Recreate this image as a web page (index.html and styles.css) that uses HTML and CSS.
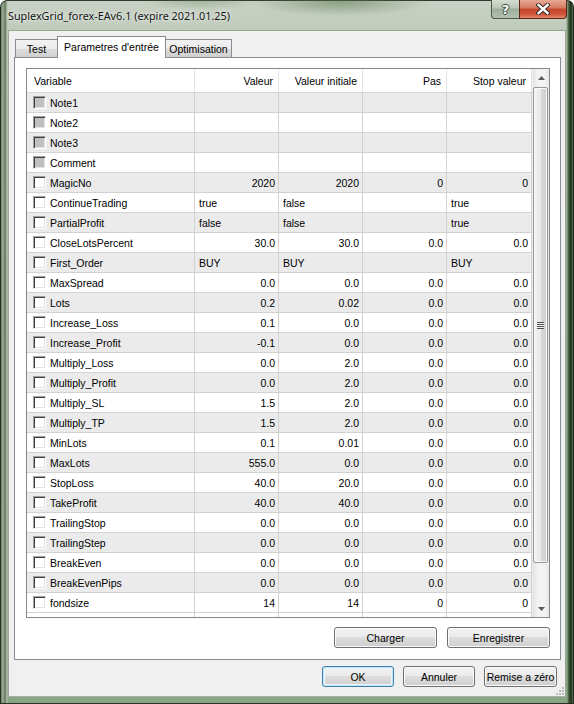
FILE: index.html
```html
<!DOCTYPE html>
<html lang="fr">
<head>
<meta charset="utf-8">
<title>SuplexGrid_forex-EAv6.1</title>
<link rel="stylesheet" href="styles.css">
</head>
<body>
<div class="window">
  <div class="titlebar">
    <div class="title">SuplexGrid_forex-EAv6.1 (expire 2021.01.25)</div>
    <div class="caption-buttons">
      <div class="cap help">?</div>
      <div class="cap close">
        <svg width="14" height="12" viewBox="0 0 14 12"><path d="M2.5 2 L11.5 10 M11.5 2 L2.5 10" stroke="#3a2a26" stroke-width="4.4" stroke-linecap="square" fill="none"/><path d="M2.5 2 L11.5 10 M11.5 2 L2.5 10" stroke="#ffffff" stroke-width="2.4" stroke-linecap="square" fill="none"/></svg>
      </div>
    </div>
  </div>
  <div class="client">
    <div class="tabs">
      <div class="tab first">Test</div>
      <div class="tab selected">Parametres d'entrée</div>
      <div class="tab last">Optimisation</div>
    </div>
    <div class="panel">
      <div class="list">
        <div class="grid">
          <div class="row head">
            <div class="c var">Variable</div>
            <div class="c num">Valeur</div>
            <div class="c num">Valeur initiale</div>
            <div class="c num">Pas</div>
            <div class="c num">Stop valeur</div>
          </div>
          <div class="row odd"><div class="c var"><span class="chk dis"></span>Note1</div><div class="c"></div><div class="c"></div><div class="c"></div><div class="c"></div></div>
          <div class="row"><div class="c var"><span class="chk dis"></span>Note2</div><div class="c"></div><div class="c"></div><div class="c"></div><div class="c"></div></div>
          <div class="row odd"><div class="c var"><span class="chk dis"></span>Note3</div><div class="c"></div><div class="c"></div><div class="c"></div><div class="c"></div></div>
          <div class="row"><div class="c var"><span class="chk dis"></span>Comment</div><div class="c"></div><div class="c"></div><div class="c"></div><div class="c"></div></div>
          <div class="row odd"><div class="c var"><span class="chk"></span>MagicNo</div><div class="c num">2020</div><div class="c num">2020</div><div class="c num">0</div><div class="c num">0</div></div>
          <div class="row"><div class="c var"><span class="chk"></span>ContinueTrading</div><div class="c txt">true</div><div class="c txt">false</div><div class="c"></div><div class="c txt">true</div></div>
          <div class="row odd"><div class="c var"><span class="chk"></span>PartialProfit</div><div class="c txt">false</div><div class="c txt">false</div><div class="c"></div><div class="c txt">true</div></div>
          <div class="row"><div class="c var"><span class="chk"></span>CloseLotsPercent</div><div class="c num">30.0</div><div class="c num">30.0</div><div class="c num">0.0</div><div class="c num">0.0</div></div>
          <div class="row odd"><div class="c var"><span class="chk"></span>First_Order</div><div class="c txt">BUY</div><div class="c txt">BUY</div><div class="c"></div><div class="c txt">BUY</div></div>
          <div class="row"><div class="c var"><span class="chk"></span>MaxSpread</div><div class="c num">0.0</div><div class="c num">0.0</div><div class="c num">0.0</div><div class="c num">0.0</div></div>
          <div class="row odd"><div class="c var"><span class="chk"></span>Lots</div><div class="c num">0.2</div><div class="c num">0.02</div><div class="c num">0.0</div><div class="c num">0.0</div></div>
          <div class="row"><div class="c var"><span class="chk"></span>Increase_Loss</div><div class="c num">0.1</div><div class="c num">0.0</div><div class="c num">0.0</div><div class="c num">0.0</div></div>
          <div class="row odd"><div class="c var"><span class="chk"></span>Increase_Profit</div><div class="c num">-0.1</div><div class="c num">0.0</div><div class="c num">0.0</div><div class="c num">0.0</div></div>
          <div class="row"><div class="c var"><span class="chk"></span>Multiply_Loss</div><div class="c num">0.0</div><div class="c num">2.0</div><div class="c num">0.0</div><div class="c num">0.0</div></div>
          <div class="row odd"><div class="c var"><span class="chk"></span>Multiply_Profit</div><div class="c num">0.0</div><div class="c num">2.0</div><div class="c num">0.0</div><div class="c num">0.0</div></div>
          <div class="row"><div class="c var"><span class="chk"></span>Multiply_SL</div><div class="c num">1.5</div><div class="c num">2.0</div><div class="c num">0.0</div><div class="c num">0.0</div></div>
          <div class="row odd"><div class="c var"><span class="chk"></span>Multiply_TP</div><div class="c num">1.5</div><div class="c num">2.0</div><div class="c num">0.0</div><div class="c num">0.0</div></div>
          <div class="row"><div class="c var"><span class="chk"></span>MinLots</div><div class="c num">0.1</div><div class="c num">0.01</div><div class="c num">0.0</div><div class="c num">0.0</div></div>
          <div class="row odd"><div class="c var"><span class="chk"></span>MaxLots</div><div class="c num">555.0</div><div class="c num">0.0</div><div class="c num">0.0</div><div class="c num">0.0</div></div>
          <div class="row"><div class="c var"><span class="chk"></span>StopLoss</div><div class="c num">40.0</div><div class="c num">20.0</div><div class="c num">0.0</div><div class="c num">0.0</div></div>
          <div class="row odd"><div class="c var"><span class="chk"></span>TakeProfit</div><div class="c num">40.0</div><div class="c num">40.0</div><div class="c num">0.0</div><div class="c num">0.0</div></div>
          <div class="row"><div class="c var"><span class="chk"></span>TrailingStop</div><div class="c num">0.0</div><div class="c num">0.0</div><div class="c num">0.0</div><div class="c num">0.0</div></div>
          <div class="row odd"><div class="c var"><span class="chk"></span>TrailingStep</div><div class="c num">0.0</div><div class="c num">0.0</div><div class="c num">0.0</div><div class="c num">0.0</div></div>
          <div class="row"><div class="c var"><span class="chk"></span>BreakEven</div><div class="c num">0.0</div><div class="c num">0.0</div><div class="c num">0.0</div><div class="c num">0.0</div></div>
          <div class="row odd"><div class="c var"><span class="chk"></span>BreakEvenPips</div><div class="c num">0.0</div><div class="c num">0.0</div><div class="c num">0.0</div><div class="c num">0.0</div></div>
          <div class="row"><div class="c var"><span class="chk"></span>fondsize</div><div class="c num">14</div><div class="c num">14</div><div class="c num">0</div><div class="c num">0</div></div>
          <div class="row partial"><div class="c"></div><div class="c"></div><div class="c"></div><div class="c"></div><div class="c"></div></div>
        </div>
        <div class="scrollbar">
          <div class="sb-btn"><svg width="7" height="4" viewBox="0 0 7 4"><path d="M0 4 L3.5 0 L7 4 Z" fill="#5a5a5a"/></svg></div>
          <div class="thumb"><span class="grip"></span></div>
          <div class="sb-fill"></div>
          <div class="sb-btn"><svg width="7" height="4" viewBox="0 0 7 4"><path d="M0 0 L3.5 4 L7 0 Z" fill="#5a5a5a"/></svg></div>
        </div>
      </div>
      <div class="panel-buttons">
        <button class="btn wide">Charger</button>
        <button class="btn wide">Enregistrer</button>
      </div>
    </div>
    <div class="dialog-buttons">
      <button class="btn default">OK</button>
      <button class="btn">Annuler</button>
      <button class="btn">Remise a zéro</button>
    </div>
    <svg class="gripper" width="10" height="10" viewBox="0 0 10 10">
      <g fill="#b9b9b9"><rect x="8" y="2" width="2" height="2"/><rect x="5" y="5" width="2" height="2"/><rect x="8" y="5" width="2" height="2"/><rect x="2" y="8" width="2" height="2"/><rect x="5" y="8" width="2" height="2"/><rect x="8" y="8" width="2" height="2"/></g>
    </svg>
  </div>
</div>
</body>
</html>
```
FILE: styles.css
```css
* { box-sizing: border-box; }
html, body { margin: 0; padding: 0; }
body {
  width: 574px;
  height: 704px;
  overflow: hidden;
  background: #ffffff;
  font-family: "Liberation Sans", Arial, sans-serif;
  font-size: 10.5px;
  color: #000;
}
.window {
  width: 574px;
  height: 704px;
  display: flex;
  flex-direction: column;
  padding-bottom: 7px;
  border-radius: 7px 7px 0 0;
  background:
    linear-gradient(to right, #2c3828 0px, #6d8166 1px, #9fb098 3px, #5f7459 5px, #b3c1ad 7px, rgba(0,0,0,0) 8px, rgba(0,0,0,0) 566px, #8fa588 567px, #3c5236 569px, #20301c 571px, #56704f 573px),
    linear-gradient(to bottom, #c9d2c5 0px, #bfcbbb 30px, #9db29a 300px, #8aa486 704px);
  box-shadow: inset 0 0 0 1px rgba(30,40,28,0.9);
}
.titlebar {
  height: 30px;
  flex: none;
  display: flex;
  align-items: flex-start;
  padding: 0 7px 0 8px;
  background:
    radial-gradient(ellipse 90px 14px at 340px 2px, rgba(90,120,80,0.55), rgba(90,120,80,0)),
    radial-gradient(ellipse 60px 10px at 200px 0px, rgba(90,120,80,0.35), rgba(90,120,80,0));
  border-radius: 7px 7px 0 0;
}
.title {
  font-family: "Noto Sans", "Open Sans", sans-serif;
  font-size: 10.8px;
  line-height: 31px;
  color: #111;
  text-shadow: 0 0 6px rgba(255,255,255,0.9), 0 0 2px rgba(255,255,255,0.8);
  white-space: nowrap;
}
.caption-buttons {
  margin-left: auto;
  display: flex;
  margin-top: 0;
}
.cap {
  height: 19px;
  display: flex;
  align-items: center;
  justify-content: center;
  border: 1px solid #4d5a4a;
  border-top: none;
}
.help {
  width: 28px;
  border-radius: 0 0 0 4px;
  border-right: none;
  background: linear-gradient(to bottom, #d6ddd3 0%, #bac6b6 45%, #9fae9b 50%, #b3c2b0 100%);
  color: #fff;
  font-family: "DejaVu Sans", sans-serif;
  font-weight: bold;
  font-size: 13px;
  text-shadow: 1px 0 0 #3c4a3a, -1px 0 0 #3c4a3a, 0 1px 0 #3c4a3a, 0 -1px 0 #3c4a3a;
}
.close {
  width: 48px;
  border-radius: 0 0 4px 0;
  border-color: #5a2418;
  background: linear-gradient(to bottom, #e8a994 0%, #d77a62 45%, #c5452c 50%, #d0573b 80%, #e08a6c 100%);
}
.client {
  flex: 1;
  margin: 0 8px 0 8px;
  background: #f0f0f0;
  border: 1px solid #9aa796;
  border-bottom-color: #a4b0a0;
  padding: 5px 4px 0 5px;
  display: flex;
  flex-direction: column;
  position: relative;
}
.tabs {
  display: flex;
  height: 21px;
  padding-left: 1px;
  align-items: flex-start;
}
.tab {
  font-size: 10.5px;
  text-align: center;
  border: 1px solid #898c95;
  border-bottom: none;
  white-space: nowrap;
}
.tab.first, .tab.last {
  margin-top: 3px;
  height: 18px;
  line-height: 18px;
  background: linear-gradient(to bottom, #f2f2f2 0%, #ebebeb 50%, #dddddd 51%, #cfcfcf 100%);
}
.tab.first { width: 43px; }
.tab.last { width: 67px; margin-left: -1px; }
.tab.selected {
  width: 109px;
  height: 22px;
  margin-left: -1px;
  line-height: 20px;
  background: #ffffff;
  position: relative;
  z-index: 1;
}
.panel {
  border: 1px solid #898c95;
  background: #ffffff;
  padding: 10px 10px 11px 11px;
  width: 547px;
}
.list {
  width: 524px;
  height: 550px;
  border: 1px solid #828790;
  display: flex;
  background: #fff;
}
.grid {
  width: 505px;
  display: flex;
  flex-direction: column;
  overflow: hidden;
}
.row {
  display: grid;
  grid-template-columns: 168px 84px 84px 84px 85px;
  height: 20px;
  flex: none;
}
.row.odd { background: #ebebeb; }
.row .c {
  border-right: 1px solid #d2d2d2;
  border-bottom: 1px solid #d2d2d2;
  display: flex;
  align-items: center;
  white-space: nowrap;
  overflow: hidden;
}
.row .c.num { justify-content: flex-end; padding-right: 3px; }
.row .c.txt { padding-left: 4px; }
.row .c.var { padding-left: 6px; }
.row.head { height: 24px; background: #fff; }
.row.head .c { border-right-color: #e3e3e3; border-bottom-color: #d5d5d5; }
.row.head .c.num { padding-right: 5px; }
.row.head .c.var { padding-left: 7px; }
.row.partial { height: 4px; background: #fff; }
.row.partial .c { border-bottom: none; }
.chk {
  width: 13px;
  height: 13px;
  flex: none;
  margin-right: 4px;
  background: #fff;
  border: 1px solid;
  border-color: #a0a0a0 #ffffff #ffffff #a0a0a0;
  box-shadow: inset 1px 1px 0 #404040, inset -1px -1px 0 #e3e3e3;
}
.chk.dis { background: #c0c0c0; }
.scrollbar {
  width: 17px;
  display: flex;
  flex-direction: column;
  background: linear-gradient(to right, #e3e3e3 0%, #f3f3f3 30%, #f3f3f3 70%, #e8e8e8 100%);
  border-left: 1px solid #ececec;
}
.sb-btn {
  height: 17px;
  flex: none;
  display: flex;
  align-items: center;
  justify-content: center;
}
.thumb {
  height: 476px;
  margin: 1px 1px 0 0;
  border: 1px solid #979797;
  border-radius: 2px;
  background: linear-gradient(to right, #f4f4f4 0%, #e9e9e9 50%, #d8d8d8 51%, #d0d0d0 100%);
  box-shadow: inset 0 0 0 1px #f8f8f8;
  display: flex;
  align-items: center;
  justify-content: center;
}
.grip {
  width: 7px;
  height: 7px;
  background: repeating-linear-gradient(to bottom, #4f4f4f 0px, #4f4f4f 1px, #f2f2f2 1px, #f2f2f2 2px);
}
.sb-fill { flex: 1; }
.panel-buttons {
  display: flex;
  justify-content: flex-end;
  gap: 10px;
  margin-top: 9px;
}
.btn {
  height: 21px;
  width: 72px;
  padding: 0;
  font-family: "Liberation Sans", Arial, sans-serif;
  font-size: 10.5px;
  color: #000;
  border: 1px solid #707070;
  border-radius: 3px;
  background: linear-gradient(to bottom, #f2f2f2 0%, #ebebeb 48%, #dddddd 50%, #cfcfcf 100%);
  box-shadow: inset 0 0 0 1px #fbfbfb;
}
.btn.wide { width: 103px; }
.btn.default {
  border-color: #3c7fb1;
  box-shadow: inset 0 0 0 1px #c4e5f6, inset 0 0 0 2px #e9f6fd;
}
.dialog-buttons {
  display: flex;
  justify-content: flex-end;
  gap: 9px;
  margin-top: 6px;
  padding-right: 4px;
}
.dialog-buttons .btn:last-child { width: 73px; }
.gripper {
  position: absolute;
  right: 1px;
  bottom: 1px;
}
```
